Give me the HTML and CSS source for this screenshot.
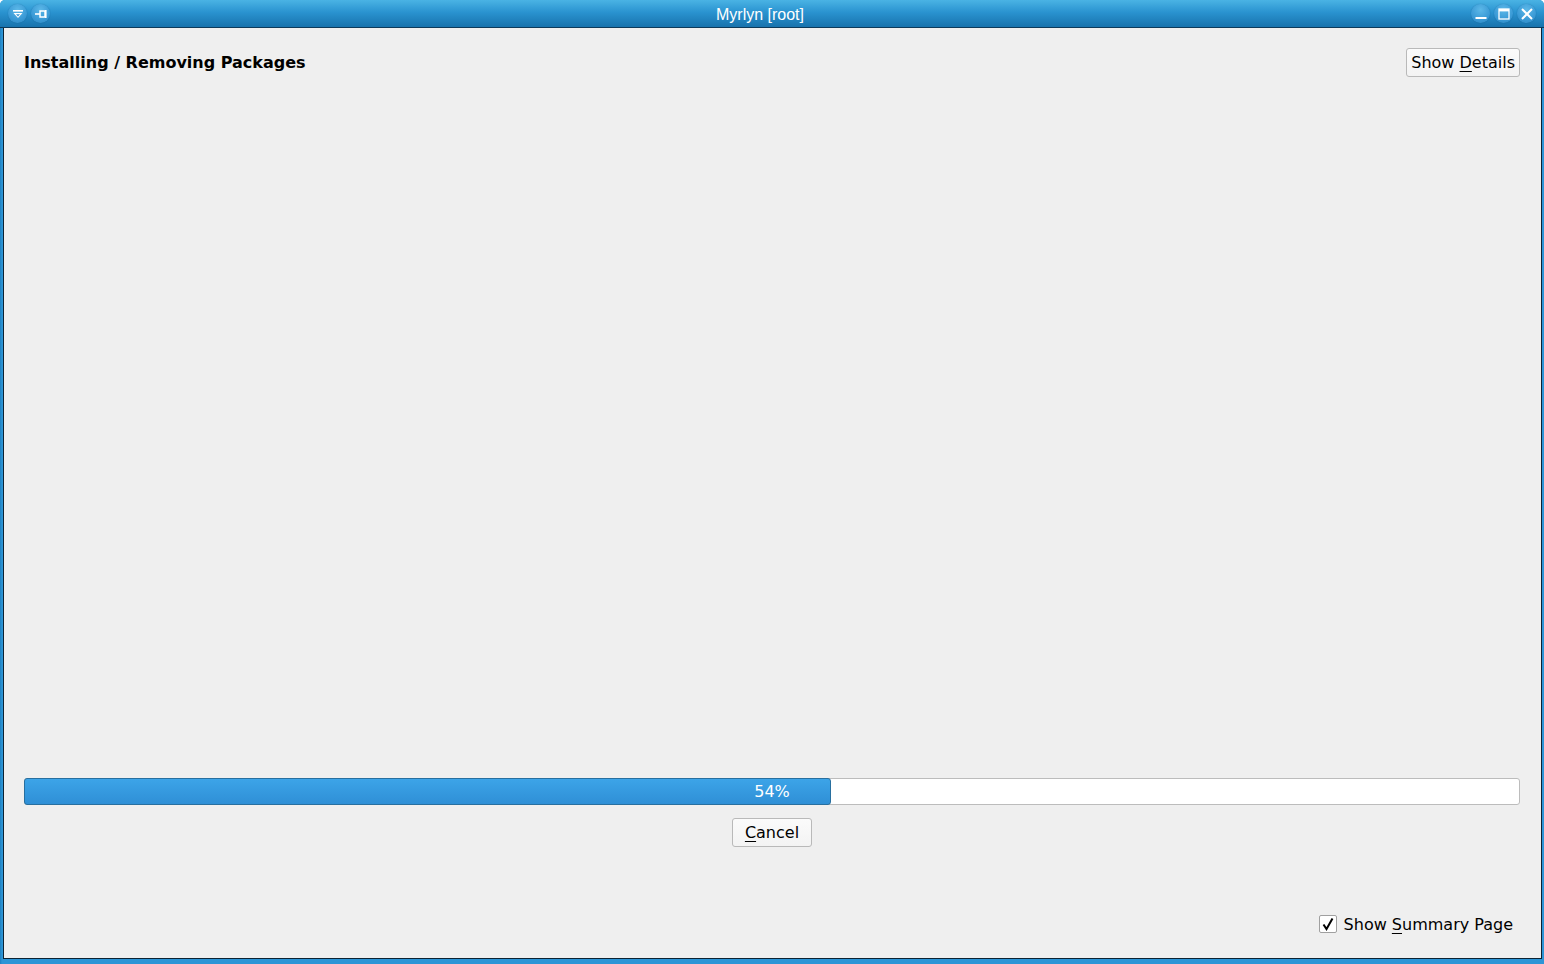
FILE: index.html
```html
<!DOCTYPE html>
<html lang="en">
<head>
    <meta charset="UTF-8">
    <title>Myrlyn [root]</title>
    <link rel="stylesheet" href="styles.css">
</head>
<body>

    <div class="window">
        <div class="titlebar">
            <div class="tb-left">
                <span class="tb-btn">
                    <svg width="12" height="12" viewBox="0 0 12 12">
                        <rect x="1" y="2" width="10" height="1.6" fill="#fff"/>
                        <path d="M1.5 5 L10.5 5 L6 10 Z" fill="#fff"/>
                        <path d="M4 6.2 L8 6.2 L6 8.4 Z" fill="#3896d2"/>
                    </svg>
                </span>
                <span class="tb-btn">
                    <svg width="14" height="12" viewBox="0 0 14 12">
                        <rect x="1" y="5.2" width="5" height="1.6" fill="#fff"/>
                        <rect x="6" y="3" width="5" height="6" fill="none" stroke="#fff" stroke-width="1.5"/>
                        <rect x="11" y="2" width="1.6" height="8" fill="#fff"/>
                    </svg>
                </span>
            </div>
            <div class="title">Myrlyn [root]</div>
            <div class="tb-right">
                <span class="tb-btn">
                    <svg width="12" height="12" viewBox="0 0 12 12">
                        <rect x="0.5" y="9" width="11" height="2" fill="#fff"/>
                    </svg>
                </span>
                <span class="tb-btn">
                    <svg width="12" height="12" viewBox="0 0 12 12">
                        <rect x="1" y="1" width="10" height="10" fill="none" stroke="#fff" stroke-width="1.3"/>
                        <rect x="1" y="1" width="10" height="2.4" fill="#fff"/>
                    </svg>
                </span>
                <span class="tb-btn">
                    <svg width="12" height="12" viewBox="0 0 12 12">
                        <path d="M1 1 L11 11 M11 1 L1 11" stroke="#fff" stroke-width="2"/>
                    </svg>
                </span>
            </div>
        </div>

        <div class="frame">
            <div class="content">
                <div class="header">
                    <h1 class="heading">Installing / Removing Packages</h1>
                    <button class="btn">Show <u>D</u>etails</button>
                </div>

                <div class="spacer"></div>

                <div class="progress">
                    <div class="progress-fill" style="width: 54%"></div>
                    <div class="progress-text">54%</div>
                </div>

                <div class="cancel-row">
                    <button class="btn btn-cancel"><u>C</u>ancel</button>
                </div>

                <div class="footer">
                    <label class="check">
                        <span class="check-box">
                            <svg width="14" height="14" viewBox="0 0 14 14">
                                <path d="M2.5 7.5 L5.5 12 L11.5 1.5" fill="none" stroke="#000" stroke-width="2"/>
                            </svg>
                        </span>
                        <span>Show <u>S</u>ummary Page</span>
                    </label>
                </div>
            </div>
        </div>
    </div>

</body>
</html>
```

FILE: styles.css
```css
html, body {
    margin: 0;
    padding: 0;
    height: 100%;
}

body {
    background-color: #fff;
    font-family: "DejaVu Sans", sans-serif;
    font-size: 16px;
    color: #000;
}

.window {
    height: 964px;
    display: flex;
    flex-direction: column;
    background-color: #2a8ccb;
    border-radius: 5px 5px 0 0;
    overflow: hidden;
}

.titlebar {
    height: 27px;
    display: flex;
    align-items: center;
    background: linear-gradient(#4ab3e4, #2a93d0 45%, #1873ad);
    border-bottom: 1px solid #0d3a5a;
    color: #fff;
}

.tb-left {
    width: 50px;
    display: flex;
    gap: 4px;
    padding-left: 8px;
    box-sizing: border-box;
}

.tb-right {
    width: 74px;
    display: flex;
    gap: 4px;
    padding-left: 1px;
    box-sizing: border-box;
}

.tb-btn {
    width: 19px;
    height: 19px;
    border-radius: 50%;
    background: radial-gradient(circle at 50% 30%, #5cb8e8, #3a9ad6 60%, #2c86c0);
    box-shadow: 0 0 1px rgba(10, 60, 100, 0.5);
    display: flex;
    align-items: center;
    justify-content: center;
}

.title {
    flex: 1;
    text-align: center;
    font-family: "Liberation Sans", sans-serif;
    font-size: 16px;
    padding-top: 2px;
}

.frame {
    flex: 1;
    display: flex;
    padding: 0 2px 5px 3px;
    background: linear-gradient(90deg, #1d7fc0, #2d95d6 2px);
}

.content {
    flex: 1;
    display: flex;
    flex-direction: column;
    background-color: #efefef;
    border-left: 1px solid #0c2233;
    border-right: 1px solid #0c2233;
    border-bottom: 1px solid #0c2233;
    padding: 20px 21px 23px 20px;
}

.header {
    display: flex;
    align-items: center;
    justify-content: space-between;
}

.heading {
    margin: 0;
    font-size: 16px;
    font-weight: bold;
}

.btn {
    font-family: "DejaVu Sans", sans-serif;
    font-size: 16px;
    color: #000;
    background: linear-gradient(#fbfbfb, #f3f3f3);
    border: 1px solid #b9b9b9;
    border-radius: 3px;
    height: 29px;
    padding: 0 4px;
}

.btn u,
.check u {
    text-underline-offset: 3px;
}

.spacer {
    flex: 1;
}

.progress {
    position: relative;
    height: 27px;
    background-color: #fff;
    border: 1px solid #bcbcbc;
    border-radius: 3px;
    box-sizing: border-box;
}

.progress-fill {
    position: absolute;
    left: -1px;
    top: -1px;
    bottom: -1px;
    background: linear-gradient(#3ca4e8, #2f8fd6);
    border: 1px solid #286f9f;
    border-radius: 3px;
    box-sizing: border-box;
}

.progress-text {
    position: relative;
    text-align: center;
    color: #fff;
    line-height: 26px;
}

.cancel-row {
    display: flex;
    justify-content: center;
    margin-top: 13px;
}

.btn-cancel {
    width: 80px;
}

.footer {
    margin-top: 66px;
    height: 22px;
    display: flex;
    justify-content: flex-end;
    align-items: center;
    padding-right: 7px;
}

.check {
    display: flex;
    align-items: center;
    gap: 7px;
}

.check-box {
    width: 16px;
    height: 16px;
    background-color: #fff;
    border: 1px solid #a0a0a0;
    border-radius: 2px;
    display: flex;
    align-items: center;
    justify-content: center;
}
```
